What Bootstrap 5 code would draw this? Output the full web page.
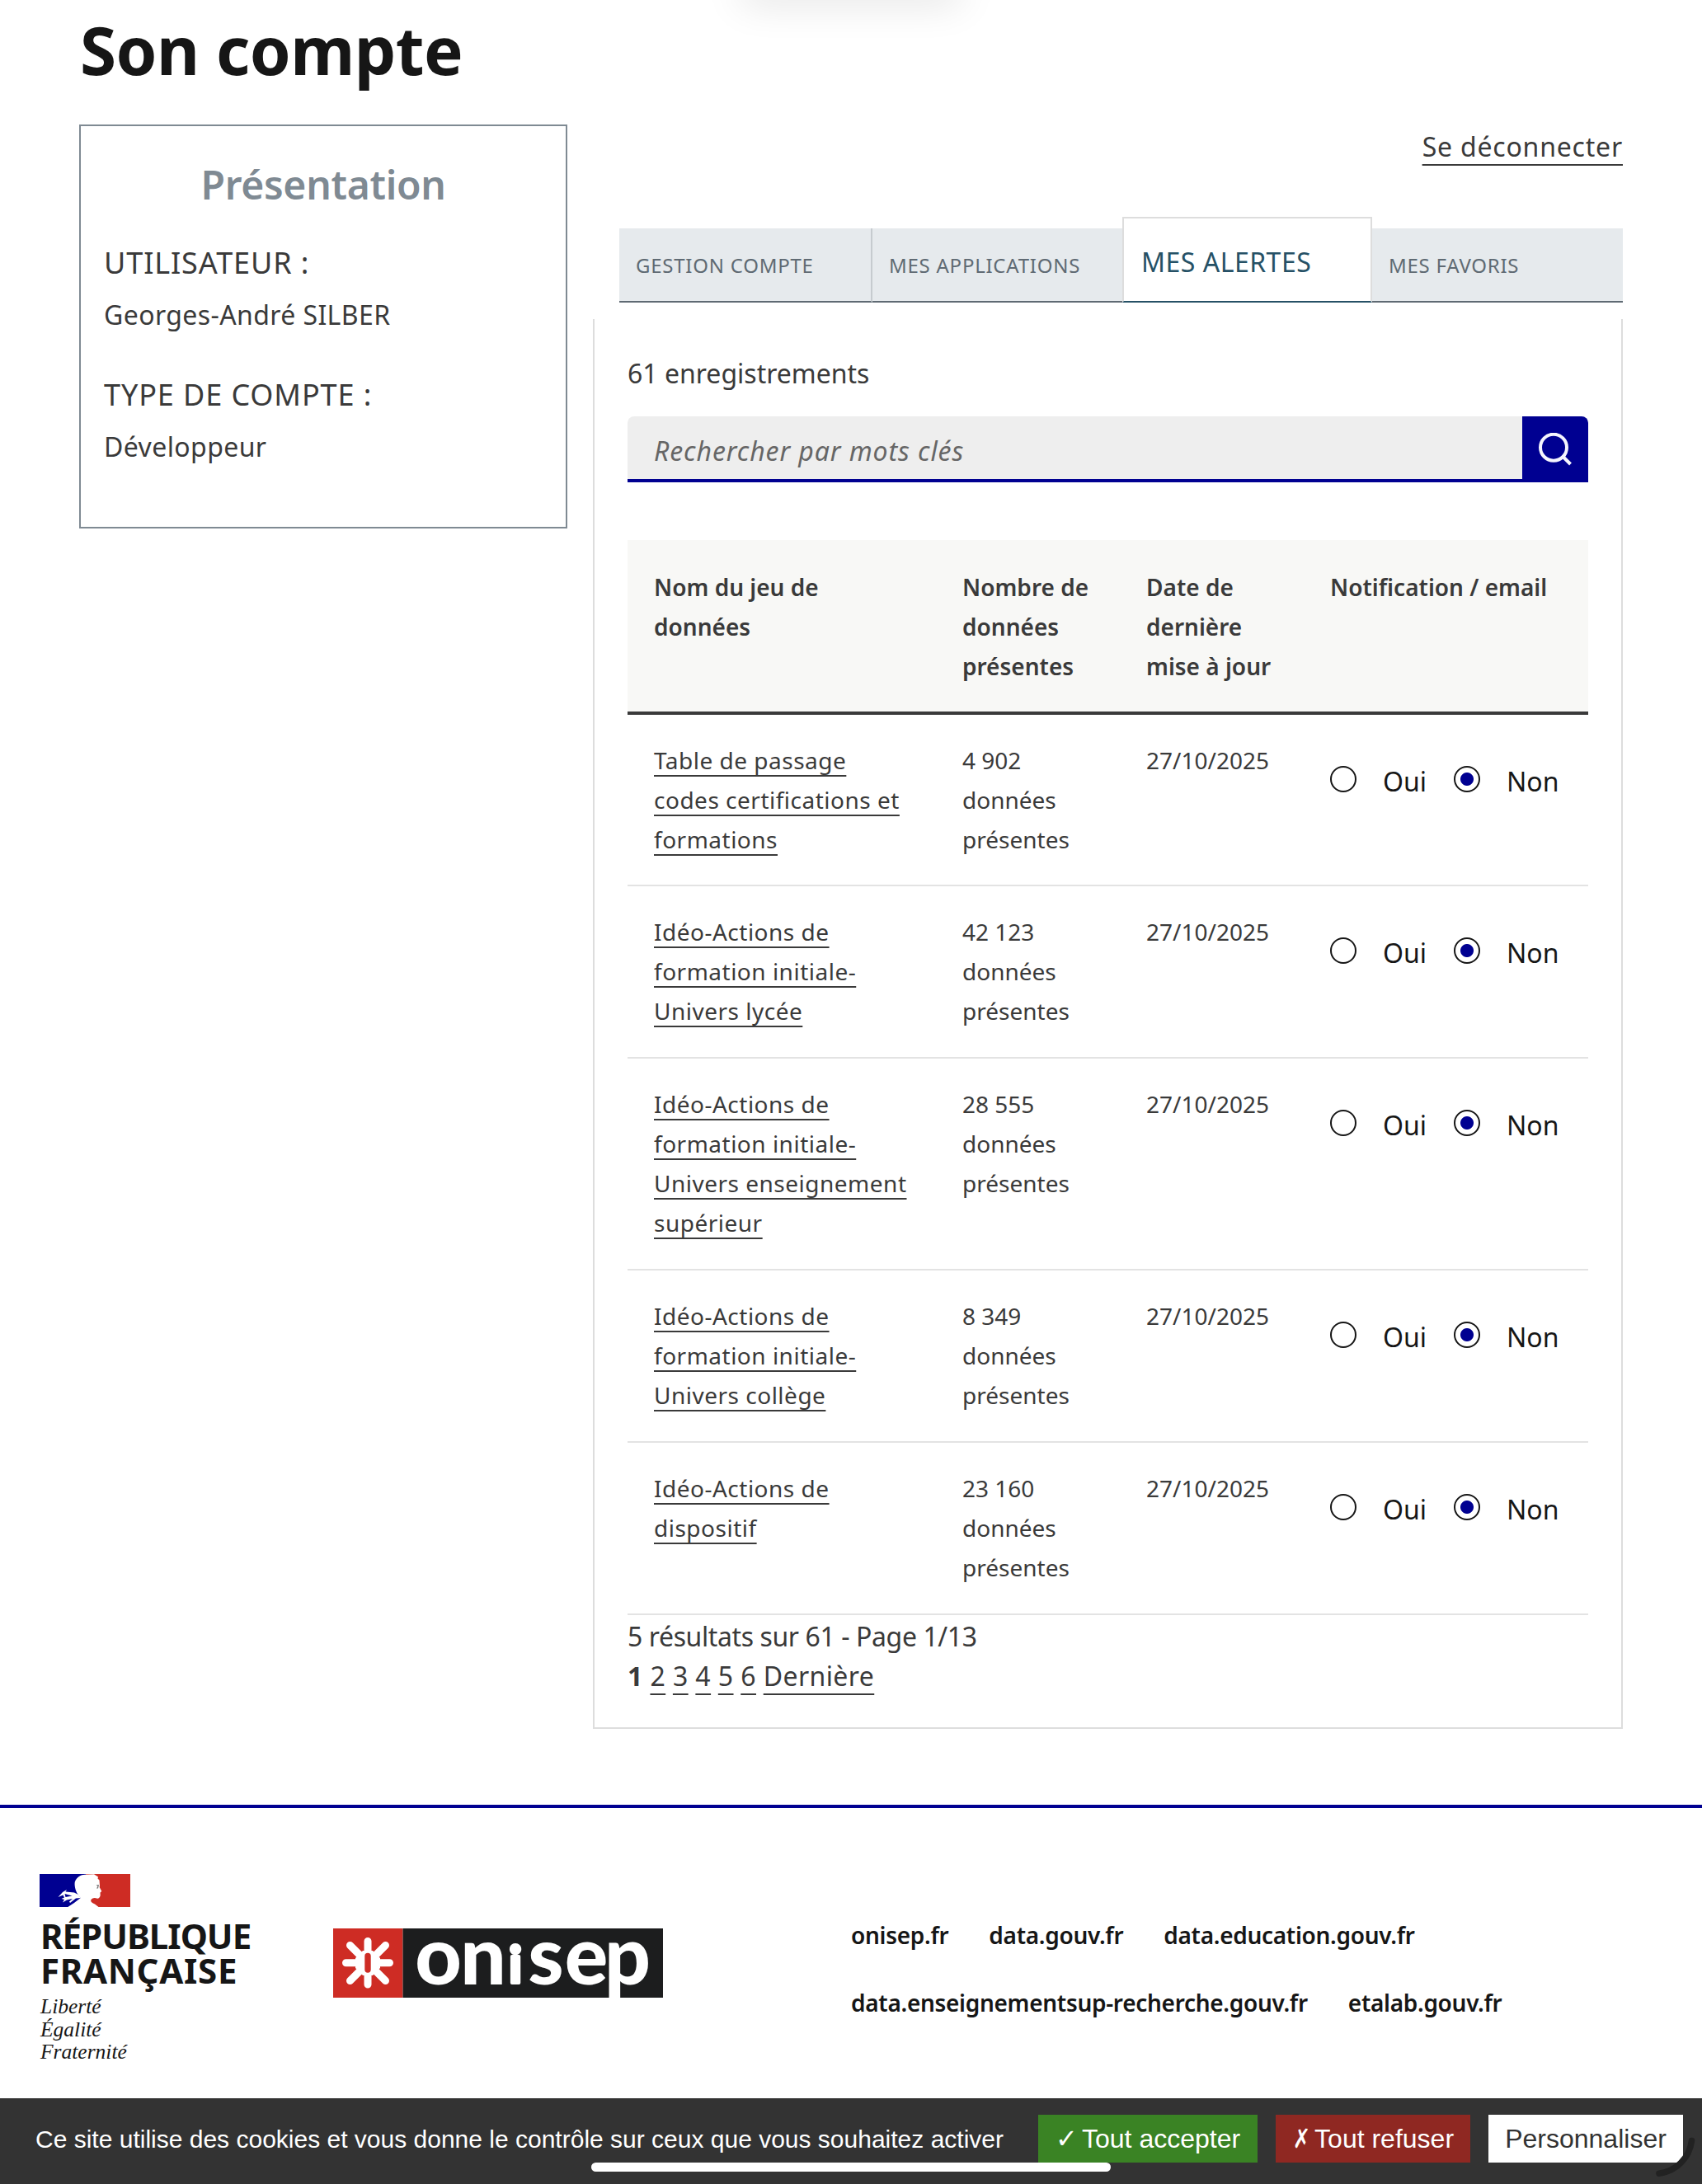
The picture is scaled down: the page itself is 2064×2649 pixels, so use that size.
<!DOCTYPE html>
<html lang="fr">

<head>
  <meta charset="UTF-8">
  <meta name="viewport" content="width=device-width, initial-scale=1.0">
  <title>Son compte</title>
  <link href="https://cdn.jsdelivr.net/npm/bootstrap@5.3.2/dist/css/bootstrap.min.css" rel="stylesheet">

  <style>
    body {
      font-family: "Noto Sans", "Liberation Sans", sans-serif;
      font-size: 32px;
      line-height: 48px;
      color: #3a3a3a;
      background-color: #fff;
      height: 2649px;
      overflow: hidden;
      position: relative;
    }

    a {
      color: inherit;
      text-decoration: underline;
      text-decoration-thickness: 2px;
      text-decoration-skip-ink: none;
      text-underline-offset: 9px;
    }

    .page-main {
      padding: 12px 96px 0;
    }

    h1 {
      font-size: 80px;
      line-height: 96px;
      font-weight: 700;
      letter-spacing: -0.5px;
      color: #161616;
      margin: 0 0 43px 1px;
    }

    .top-shadow {
      width: 250px;
      height: 16px;
      left: 907px;
      top: -20px;
      box-shadow: 0 0 48px 8px rgba(0, 0, 0, 0.12);
    }

    /* Encadré de présentation */
    .profile-box {
      width: 592px;
      height: 490px;
      border: 2px solid #7f8a93;
      padding: 43px 28px 0;
    }

    .profile-box h2 {
      font-size: 48px;
      line-height: 56px;
      font-weight: 600;
      letter-spacing: -0.3px;
      color: #7f8a93;
      margin: 0 0 43px;
    }

    .profile-box dt {
      font-size: 36px;
      font-weight: 400;
      letter-spacing: 0.9px;
      margin-bottom: 15px;
    }

    .profile-box dd {
      letter-spacing: 0.4px;
      margin-bottom: 49px;
    }

    /* Colonne de droite */
    .content-col {
      width: 1249px;
      padding-top: 3px;
    }

    .logout {
      letter-spacing: 0.8px;
    }

    .account-tabs {
      margin: 61px 0 20px 32px;
      height: 104px;
    }

    .account-tabs .nav-link {
      flex: none;
      width: 304px;
      height: 90px;
      padding: 21px 0 0 20px;
      font-size: 24px;
      letter-spacing: 0.75px;
      text-align: left;
      text-decoration: none;
      white-space: nowrap;
      color: #5f6a73;
      background-color: #e6eaed;
      border-radius: 0;
      border-bottom: 2px solid #5f6a73;
    }

    .account-tabs .nav-link:first-child {
      width: 307px;
      border-right: 2px solid #c6cbcf;
    }

    .account-tabs .nav-link:nth-child(2) {
      width: 303px;
    }

    .account-tabs .nav-link.active {
      width: 303px;
      height: 104px;
      padding: 29px 0 0 21px;
      font-size: 32px;
      letter-spacing: 0.5px;
      color: #265166;
      background-color: #fff;
      border: 2px solid #ddd;
      border-bottom-color: #265166;
    }

    .alerts-panel {
      height: 1710px;
      border: 2px solid #ddd;
      border-top: 0;
      padding: 42px 40px 0;
    }

    .search-bar {
      height: 80px;
      margin: 28px 0 70px;
      flex-wrap: nowrap;
    }

    .search-bar .form-control {
      height: 80px;
      padding: 6px 32px 0;
      font-size: 32px;
      letter-spacing: 0.9px;
      background-color: #eee;
      border: 0;
      border-bottom: 4px solid #000091;
      border-radius: 8px 0 0 0;
    }

    .search-bar .form-control::placeholder {
      font-style: italic;
      color: #666;
    }

    .search-bar .btn {
      width: 80px;
      padding: 0;
      background-color: #000091;
      border: 0;
      border-radius: 0 8px 0 0;
    }

    /* Tableau des alertes */
    .alerts-table {
      width: 1165px;
      table-layout: fixed;
      font-size: 28px;
      line-height: 48px;
      color: #3a3a3a;
      border-collapse: separate;
      border-spacing: 0;
    }

    .alerts-table th,
    .alerts-table td {
      padding: 31px 0 32px 32px;
      vertical-align: top;
    }

    .alerts-table th {
      padding: 33px 0 31px 32px;
      background-color: #f8f8f6;
      font-weight: 600;
      border-bottom: 4px solid #3a3a3a;
    }

    .alerts-table td {
      border-bottom: 2px solid #e3e3e3;
    }

    .alerts-table tbody tr:first-child td {
      padding-bottom: 31px;
    }

    .alerts-table a {
      letter-spacing: 0.5px;
      text-underline-offset: 7px;
    }

    .notif {
      height: 0;
      padding-top: 25px;
      font-size: 32px;
      color: #161616;
    }

    .notif .form-check-input {
      flex: none;
      width: 32px;
      height: 32px;
      margin: 6px 32px 0 0;
      border: 2px solid #161616;
      box-shadow: none;
      background-color: #fff;
    }

    .notif .form-check-input:checked {
      background-image: radial-gradient(circle, #000091 7.5px, #fff 8.5px);
    }

    .notif label {
      width: 86px;
      padding-top: 1px;
    }

    .result-count {
      padding-top: 2px;
      letter-spacing: -0.4px;
    }

    .pages {
      letter-spacing: 0.4px;
    }

    /* Pied de page */
    footer {
      margin-top: 92px;
      border-top: 4px solid #000091;
      padding: 80px 48px 0;
      color: #161616;
    }

    .brand-block {
      width: 356px;
    }

    .brand-name {
      font-size: 42px;
      line-height: 41.5px;
      font-weight: 700;
      letter-spacing: -1px;
      margin: 14px 0 9px 1px;
    }

    .brand-name .wide {
      letter-spacing: 0.7px;
    }

    .brand-motto {
      font-family: "Liberation Serif", serif;
      font-style: italic;
      font-size: 25.5px;
      line-height: 27.6px;
      padding: 1px 0 0 1px;
    }

    .onisep-logo {
      margin-top: 66px;
    }

    .onisep-logo text {
      font-family: Lato, sans-serif;
      font-weight: 900;
      font-size: 98px;
      text-anchor: middle;
    }

    .onisep-logo .short-i {
      font-size: 60px;
      stroke: #fff;
      stroke-width: 4px;
      stroke-linejoin: round;
    }

    .footer-links {
      margin: 50px 0 0 228px;
      width: 860px;
      font-size: 28px;
      letter-spacing: -0.3px;
      column-gap: 49px;
      row-gap: 34px;
    }

    .footer-links a {
      font-weight: 600;
      text-decoration: none;
    }

    /* Bandeau cookies */
    .cookie-bar {
      left: 0;
      bottom: 0;
      width: 2064px;
      height: 104px;
      padding: 20px 23px 0 43px;
      background-color: #333;
      color: #fff;
      font-family: "Liberation Sans", Arial, sans-serif;
      font-size: 30px;
      line-height: 59px;
      white-space: nowrap;
    }

    .cookie-bar .btn {
      height: 58px;
      padding: 0;
      border: 0;
      border-radius: 0;
      font-size: 32px;
      line-height: 58px;
      color: #fff;
    }

    .btn-accept {
      width: 266px;
      margin-left: auto;
      background-color: #3a8324 !important;
    }

    .btn-deny {
      width: 236px;
      margin: 0 22px;
      background-color: #8f2822 !important;
    }

    .cookie-bar .btn-custom {
      width: 236px;
      color: #333;
      background-color: #fff;
    }

    .cookie-bar .sign {
      font-family: "DejaVu Sans", sans-serif;
      font-weight: 700;
      margin-right: -3px;
    }

    .btn-deny .sign {
      display: inline-block;
      transform: scaleX(0.8);
      margin: 0 -6px 0 -2px !important;
    }

    .home-indicator {
      left: 717px;
      bottom: 15px;
      width: 630px;
      height: 11px;
      border-radius: 6px;
      background-color: #fff;
    }

    .corner-arc {
      right: 0;
      bottom: 0;
    }
  </style>
</head>

<body>
  <div class="top-shadow position-absolute"></div>

  <main class="page-main">
    <h1>Son compte</h1>

    <div class="d-flex justify-content-between align-items-start">
      <aside class="profile-box">
        <h2 class="text-center">Présentation</h2>
        <dl class="mb-0">
          <dt>UTILISATEUR :</dt>
          <dd>Georges-André SILBER</dd>
          <dt>TYPE DE COMPTE :</dt>
          <dd>Développeur</dd>
        </dl>
      </aside>

      <section class="content-col">
        <div class="text-end"><a class="logout" href="#">Se déconnecter</a></div>

        <nav class="nav account-tabs flex-nowrap align-items-end">
          <a class="nav-link" href="#">GESTION COMPTE</a>
          <a class="nav-link" href="#">MES APPLICATIONS</a>
          <a class="nav-link active" aria-current="page" href="#">MES ALERTES</a>
          <a class="nav-link" href="#">MES FAVORIS</a>
        </nav>

        <div class="alerts-panel">
          <div>61 enregistrements</div>
          <div class="input-group search-bar">
            <input type="text" class="form-control" placeholder="Rechercher par mots clés">
            <button class="btn" type="button" aria-label="Rechercher">
              <svg class="d-block mx-auto" width="40" height="40" viewBox="0 0 40 40" fill="none" stroke="#f5f5fe" stroke-width="4">
                <circle cx="18" cy="17.7" r="16" />
                <path d="M29.5 29 38.5 38" />
              </svg>
            </button>
          </div>

          <table class="alerts-table">
            <colgroup>
              <col style="width: 374px">
              <col style="width: 223px">
              <col style="width: 223px">
              <col style="width: 345px">
            </colgroup>
            <thead>
              <tr>
                <th>Nom du jeu de<br>données</th>
                <th>Nombre de<br>données<br>présentes</th>
                <th>Date de<br>dernière<br>mise à jour</th>
                <th>Notification / email</th>
              </tr>
            </thead>
            <tbody id="alerts-body"></tbody>
          </table>

          <div class="result-count">5 résultats sur 61 - Page 1/13</div>
          <div class="pages"><b>1</b> <a href="#">2</a> <a href="#">3</a> <a href="#">4</a> <a href="#">5</a> <a href="#">6</a> <a href="#">Dernière</a></div>
        </div>
      </section>
    </div>
  </main>

  <footer class="d-flex align-items-start">
    <div class="brand-block">
      <svg class="d-block" width="110" height="40" viewBox="0 0 110 40">
        <path fill="#000091" d="M0 0h56v40H0z" />
        <path fill="#ce2c24" d="M56 0h54v40H56z" />
        <path fill="#fff" d="M34.3 40 42 35 49.7 29 47 25.5C43.5 21 42 15 42.8 9.5 45 4 50 .8 55 .8L66 .3 71 3.5 70.5 5.5 72.5 7.5 73 14 72.7 16 75.3 21 73.5 22.5 73.7 26Q72.5 30 70 29.7 65 28 62.5 31 61 34.5 67 36.500L71.5 40Z" />
        <path fill="#fff" d="M22.500 28 28 22 33 19 31.500 21.500 42 22.500 47 25 50 29 44 29.500 37 35 36 33.500 40 30 33 31.500 28 34.500 30 31 26.500 30 30 28.500 28.500 25.500Z" />
        <path fill="#000091" d="M30.500 24l9 2.500-8 1.500z" />
        <path fill="#777" d="M68.500 13.500l3.500-.5-1 4.500h-2l1.500-2.500z" />
      </svg>
      <div class="brand-name">RÉPUBLIQUE<br><span class="wide">FRANÇAISE</span></div>
      <div class="brand-motto">Liberté<br>Égalité<br>Fraternité</div>
    </div>

    <svg class="onisep-logo" width="400" height="84" viewBox="0 0 400 84">
      <path fill="#ce2c24" d="M0 0h84.5v84H0z" />
      <path fill="#1c1d1e" d="M84.5 0H400v84H84.5z" />
      <g stroke="#fff" stroke-width="9" stroke-linecap="round">
        <path d="M42 15.5v52.5M15.5 41.7h53M20.5 20.5l43 43M63.5 20.5l-43 43" />
      </g>
      <path fill="#fff" d="M36 27h12l9 9v12l-9 9H36l-9-9V36z" />
      <rect x="38.3" y="29.7" width="7.4" height="24" rx="3.7" fill="#ce2c24" />
      <g fill="#fff">
        <text x="127.5" y="67.5">o</text>
        <text x="182" y="67.5">n</text>
        <text x="221" y="65.5" class="short-i">i</text>
        <text x="258" y="67.5">s</text>
        <text x="307" y="67.5">e</text>
        <text x="357" y="67.5">p</text>
      </g>
    </svg>

    <div class="footer-links d-flex flex-wrap">
      <a href="#">onisep.fr</a>
      <a href="#">data.gouv.fr</a>
      <a class="me-5" href="#">data.education.gouv.fr</a>
      <a href="#">data.enseignementsup-recherche.gouv.fr</a>
      <a href="#">etalab.gouv.fr</a>
    </div>
  </footer>

  <div class="cookie-bar d-flex position-absolute">
    <span>Ce site utilise des cookies et vous donne le contrôle sur ceux que vous souhaitez activer</span>
    <button type="button" class="btn btn-accept"><span class="sign">✓</span> Tout accepter</button>
    <button type="button" class="btn btn-deny"><span class="sign">✗</span> Tout refuser</button>
    <button type="button" class="btn btn-custom">Personnaliser</button>
  </div>
  <div class="home-indicator position-absolute"></div>
  <svg class="corner-arc position-absolute" width="64" height="64" viewBox="0 0 64 64">
    <path d="M51.5 11.5A46 46 0 0 1 12 51.3" fill="none" stroke="#222" stroke-width="7.5" stroke-linecap="round" />
  </svg>

  <script src="https://cdn.jsdelivr.net/npm/bootstrap@5.3.2/dist/js/bootstrap.bundle.min.js"></script>

  <script>
    const alerts = [
      { name: ["Table de passage", "codes certifications et", "formations"], count: "4 902" },
      { name: ["Idéo-Actions de", "formation initiale-", "Univers lycée"], count: "42 123" },
      { name: ["Idéo-Actions de", "formation initiale-", "Univers enseignement", "supérieur"], count: "28 555" },
      { name: ["Idéo-Actions de", "formation initiale-", "Univers collège"], count: "8 349" },
      { name: ["Idéo-Actions de", "dispositif"], count: "23 160" }
    ];

    // Lignes du tableau
    document.getElementById("alerts-body").innerHTML = alerts.map((alert, i) => `
      <tr>
        <td><a href="#">${alert.name.join("<br>")}</a></td>
        <td>${alert.count}<br>données<br>présentes</td>
        <td>27/10/2025</td>
        <td>
          <div class="notif d-flex">
            <input class="form-check-input" type="radio" name="notif${i}" id="oui${i}">
            <label for="oui${i}">Oui</label>
            <input class="form-check-input" type="radio" name="notif${i}" id="non${i}" checked>
            <label for="non${i}">Non</label>
          </div>
        </td>
      </tr>`).join("");
  </script>
</body>

</html>
